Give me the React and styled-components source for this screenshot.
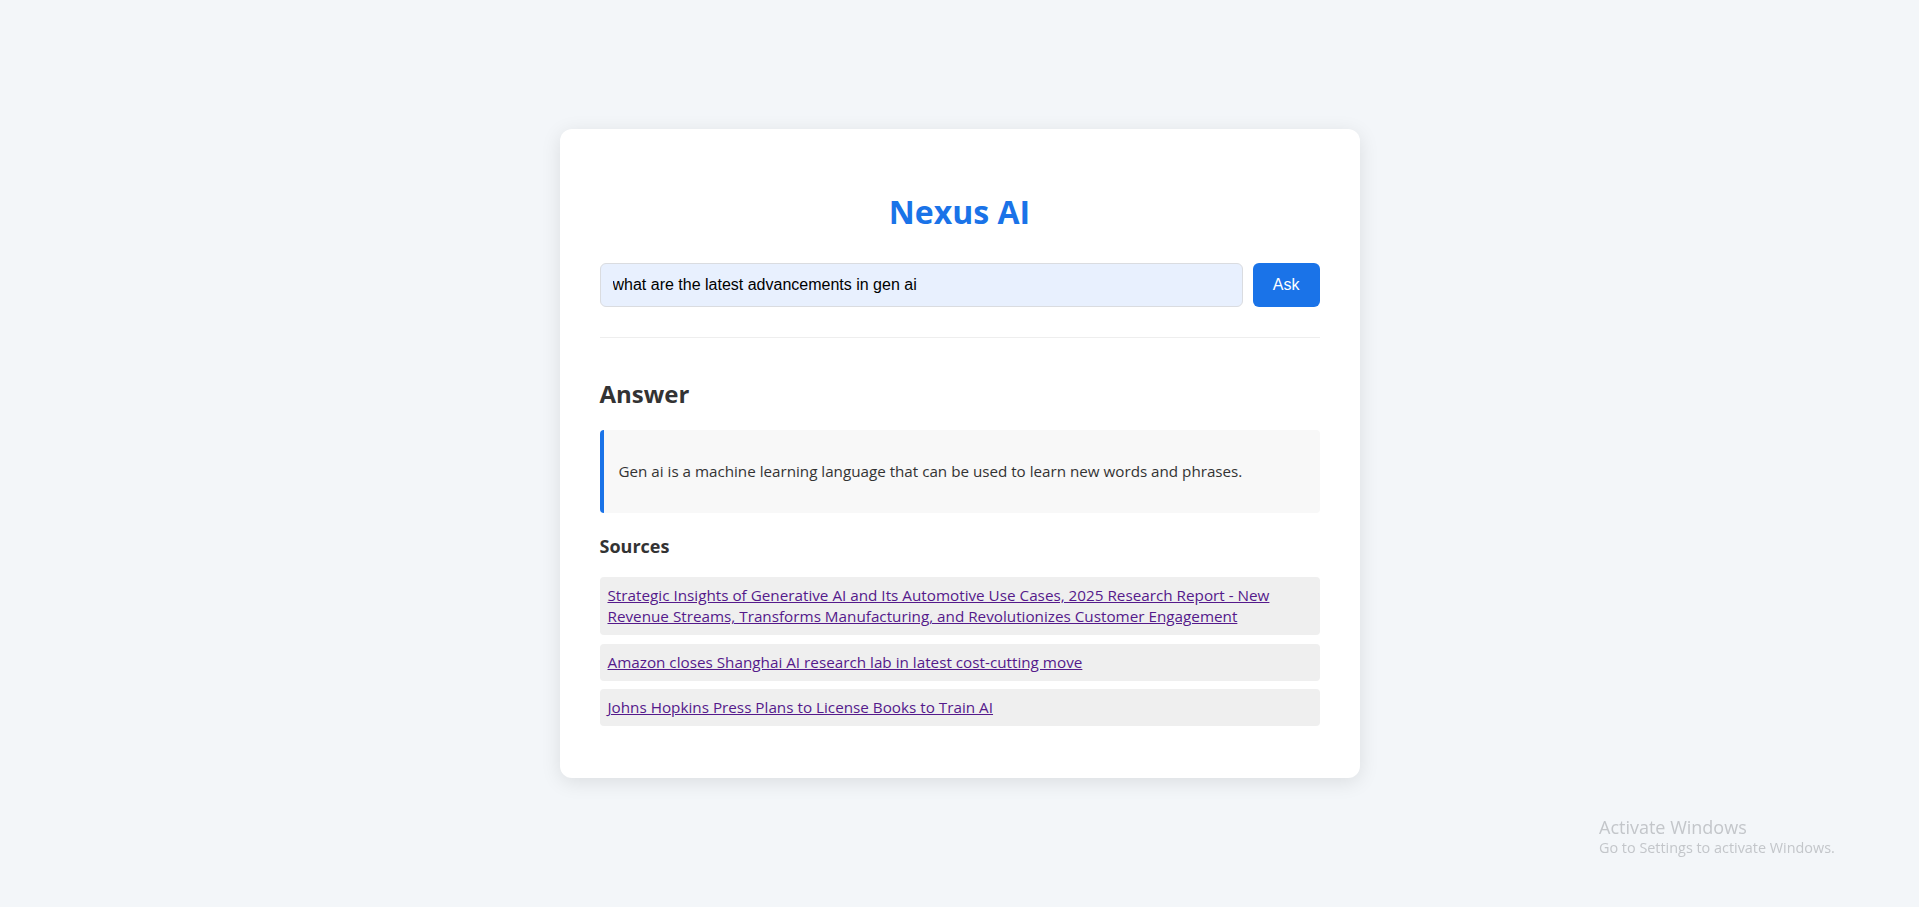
import React, { useState } from "react";
import styled, { createGlobalStyle } from "styled-components";

const GlobalStyle = createGlobalStyle`
  * { box-sizing: border-box; }
  body {
    margin: 0;
    background: #f3f6f9;
    font-family: "Segoe UI", "Open Sans", sans-serif;
    color: #333;
  }
`;

const sources = [
  "Strategic Insights of Generative AI and Its Automotive Use Cases, 2025 Research Report - New Revenue Streams, Transforms Manufacturing, and Revolutionizes Customer Engagement",
  "Amazon closes Shanghai AI research lab in latest cost-cutting move",
  "Johns Hopkins Press Plans to License Books to Train AI",
];

const App = () => {
  const [query, setQuery] = useState("what are the latest advancements in gen ai");

  return (
    <Page>
      <GlobalStyle />
      <Card>
        <Title>Nexus AI</Title>
        <SearchRow onSubmit={(e) => e.preventDefault()}>
          <SearchInput value={query} onChange={(e) => setQuery(e.target.value)} />
          <AskButton type="submit">Ask</AskButton>
        </SearchRow>

        <Results>
          <SectionTitle>Answer</SectionTitle>
          <AnswerBox>
            Gen ai is a machine learning language that can be used to learn new words and phrases.
          </AnswerBox>

          <SubTitle>Sources</SubTitle>
          <SourceList>
            {sources.map((s) => (
              <SourceItem key={s}>
                <a href="#">{s}</a>
              </SourceItem>
            ))}
          </SourceList>
        </Results>
      </Card>

      <Watermark>
        <strong>Activate Windows</strong>
        <span>Go to Settings to activate Windows.</span>
      </Watermark>
    </Page>
  );
};

const Page = styled.div`
  min-height: 100vh;
  display: flex;
  align-items: center;
  justify-content: center;
`;

const Card = styled.div`
  width: 800px;
  background: #fff;
  border-radius: 12px;
  padding: 40px;
  box-shadow: 0 4px 20px rgba(0, 0, 0, 0.1);
`;

const Title = styled.h1`
  margin: 24px 0 32px;
  text-align: center;
  font-size: 32px;
  line-height: 38.4px;
  font-weight: 700;
  color: #1a73e8;
`;

const SearchRow = styled.form`
  display: flex;
  gap: 10px;
`;

const SearchInput = styled.input`
  flex: 1;
  height: 44px;
  padding: 0 12px;
  font-family: "Liberation Sans", Arial, sans-serif;
  font-size: 16px;
  color: #000;
  background: #e8f0fe;
  border: 1px solid #dadce0;
  border-radius: 6px;
  outline: none;
`;

const AskButton = styled.button`
  height: 44px;
  padding: 0 20px;
  font-family: "Liberation Sans", Arial, sans-serif;
  font-size: 16px;
  color: #fff;
  background: #1a73e8;
  border: none;
  border-radius: 6px;
  cursor: pointer;
`;

const Results = styled.div`
  margin-top: 30px;
  border-top: 1px solid #eee;
`;

const SectionTitle = styled.h2`
  margin: 42px 0 21px;
  font-size: 24px;
  line-height: 28.8px;
  font-weight: 700;
  color: #333;
`;

const AnswerBox = styled.div`
  background: #f8f8f8;
  border-left: 4px solid #1a73e8;
  border-radius: 4px;
  padding: 30px 15px;
  font-size: 15.2px;
  line-height: 23px;
  color: #333;
`;

const SubTitle = styled.h3`
  margin: 23px 0 20px;
  font-size: 18px;
  line-height: 21.6px;
  font-weight: 700;
  color: #333;
`;

const SourceList = styled.ul`
  list-style: none;
  margin: 0;
  padding: 0 0 12px;
  display: flex;
  flex-direction: column;
  gap: 8.5px;
`;

const SourceItem = styled.li`
  background: #efefef;
  border-radius: 4px;
  padding: 8px;
  font-size: 15.25px;
  line-height: 21px;

  a {
    color: #551a8b;
  }
`;

const Watermark = styled.div`
  position: fixed;
  left: 1599px;
  top: 815px;
  display: flex;
  flex-direction: column;
  color: #c3c6ca;
  font-family: "Segoe UI", "Open Sans", sans-serif;
  pointer-events: none;

  strong {
    font-weight: 400;
    font-size: 18px;
    line-height: 24px;
  }
  span {
    font-size: 14.4px;
    line-height: 18px;
  }
`;

export default App;
